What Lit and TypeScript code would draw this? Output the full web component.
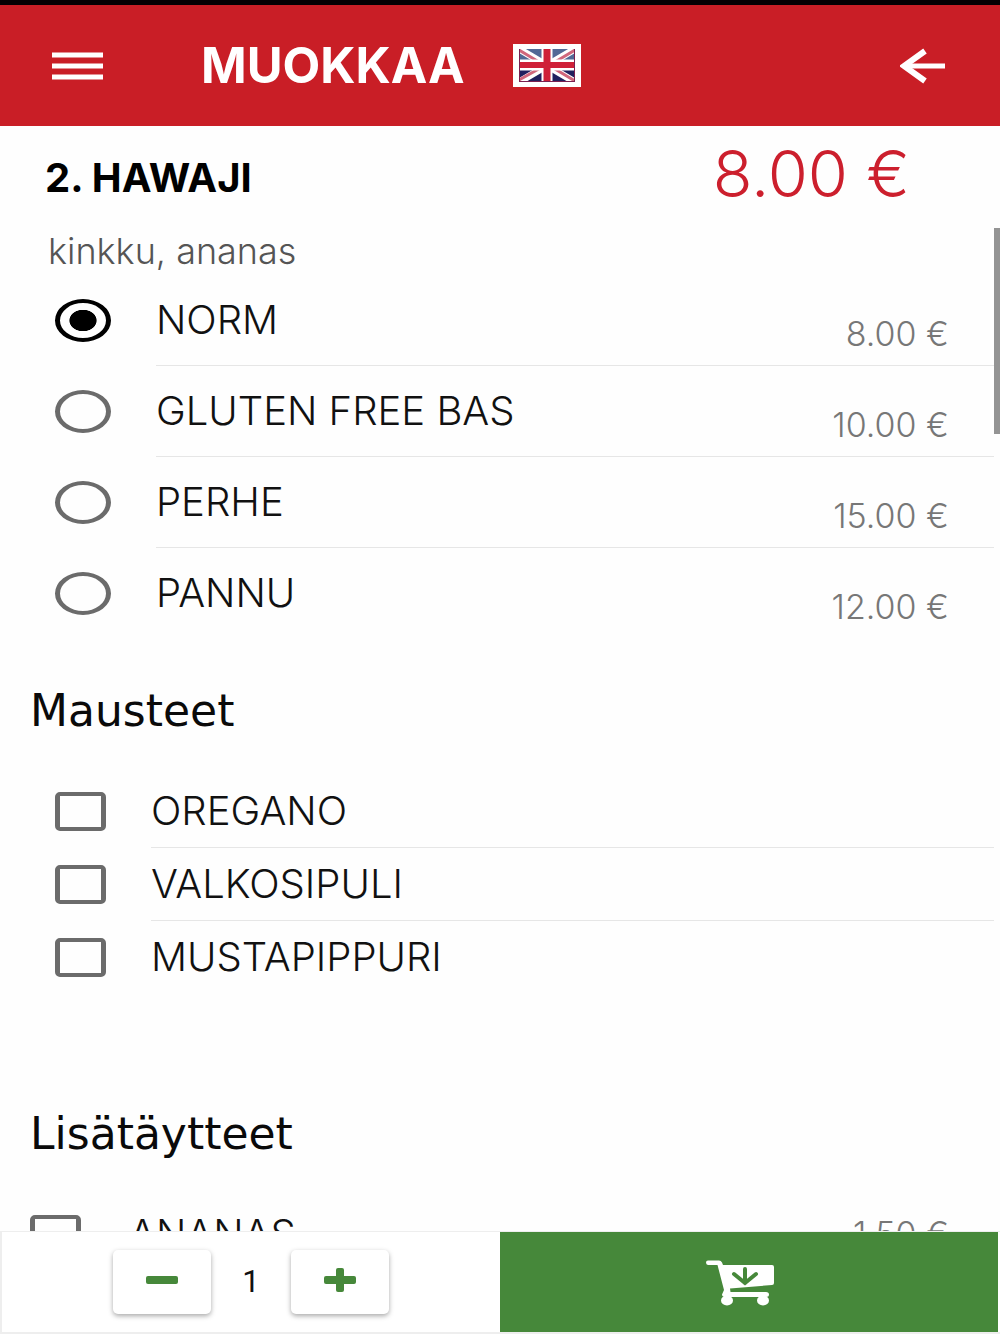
import { LitElement, html, css, nothing } from "lit";
import { customElement, state } from "lit/decorators.js";

interface Size {
  id: string;
  name: string;
  price: string;
}

const SIZES: Size[] = [
  { id: "norm", name: "NORM", price: "8.00 €" },
  { id: "gluten-free", name: "GLUTEN FREE BAS", price: "10.00 €" },
  { id: "perhe", name: "PERHE", price: "15.00 €" },
  { id: "pannu", name: "PANNU", price: "12.00 €" },
];

const SPICES = [
  { id: "oregano", name: "OREGANO" },
  { id: "valkosipuli", name: "VALKOSIPULI" },
  { id: "mustapippuri", name: "MUSTAPIPPURI" },
];

const TOPPINGS = [{ id: "ananas", name: "ANANAS", price: "1.50 €" }];

@customElement("app-root")
export class AppRoot extends LitElement {
  static styles = css`
    :host {
      display: flex;
      flex-direction: column;
      height: 100vh;
      box-sizing: border-box;
      border-top: 5px solid #050003;
      background: #fefefe;
      color: #111;
      font-family: Inter, Roboto, "Liberation Sans", sans-serif;
      font-weight: 300;
    }
    * {
      box-sizing: border-box;
    }
    button {
      margin: 0;
      padding: 0;
      border: 0;
      background: none;
      font: inherit;
      color: inherit;
      cursor: pointer;
    }
    svg {
      display: block;
    }
    .bar {
      flex: none;
      display: flex;
      align-items: center;
      height: 121px;
      padding: 0 52px;
      background: #c91e26;
      color: #fff;
    }
    .title {
      margin: 0 48px 0 98px;
      font-size: 49px;
      line-height: 56px;
      font-weight: 700;
    }
    .back {
      margin-left: auto;
    }
    .body {
      position: relative;
      flex: 1;
      min-height: 0;
    }
    .scroll {
      height: 100%;
      overflow-y: auto;
      scrollbar-width: none;
    }
    .thumb {
      position: absolute;
      top: 102px;
      right: 0;
      width: 6px;
      height: 206px;
      background: #949494;
    }
    .product {
      display: flex;
      align-items: center;
      justify-content: space-between;
      padding: 12px 90px 0 45px;
    }
    .name {
      margin: 0;
      padding-top: 8px;
      font-size: 40px;
      line-height: 44px;
      font-weight: 700;
      color: #000;
    }
    .total {
      font-size: 65px;
      line-height: 72px;
      color: #cc1f2d;
    }
    .desc {
      margin: 0;
      padding: 19px 48px 2px;
      font-size: 36px;
      line-height: 44px;
      color: #555;
    }
    .group {
      margin: 0;
      padding: 0 6px 0 55px;
      border: 0;
      min-width: 0;
    }
    .spices {
      padding-bottom: 68px;
    }
    .toppings {
      padding-left: 30px;
    }
    .row {
      display: flex;
      align-items: center;
      gap: 45px;
      cursor: pointer;
    }
    .toppings .row {
      gap: 48px;
    }
    .text {
      flex: 1;
      display: flex;
      align-items: center;
      justify-content: space-between;
      height: 73px;
      padding-right: 45px;
      border-bottom: 1px solid #e6e6e6;
      font-size: 40px;
      line-height: 44px;
    }
    .sizes .text {
      height: 91px;
    }
    .row:last-child .text {
      border-bottom-color: transparent;
    }
    .price {
      font-size: 34px;
      line-height: 40px;
      color: #777;
    }
    .sizes .price {
      padding-top: 28px;
    }
    .radio,
    .check {
      flex: none;
      appearance: none;
      margin: 0;
      border: solid #6b6b6b;
      border-width: 4px 5px;
      cursor: pointer;
    }
    .radio {
      width: 56px;
      height: 43px;
      border-radius: 50%;
    }
    .radio:checked {
      border-color: #000;
      background: radial-gradient(ellipse 14px 11px, #000 94%, transparent 100%);
    }
    .check {
      width: 51px;
      height: 39px;
      border-radius: 5px;
    }
    .check:checked {
      background: #6b6b6b;
    }
    .heading {
      margin: 0;
      padding: 48px 30px 40px;
      font-family: "DejaVu Sans", "Noto Sans", sans-serif;
      font-size: 44px;
      line-height: 48px;
      font-weight: 400;
      color: #0a0a0a;
    }
    .footer {
      flex: none;
      display: grid;
      grid-template-columns: 1fr 1fr;
      height: 103px;
      border: solid #eee;
      border-width: 1px 0 2px;
      background: #fff;
    }
    .quantity {
      display: grid;
      grid-template-columns: 98px 80px 98px;
      justify-content: center;
      align-items: center;
      border-left: 2px solid #eee;
    }
    .step {
      display: grid;
      justify-items: center;
      height: 64px;
      padding-top: 18px;
      border-radius: 5px;
      background: #fff;
      box-shadow: 0 2px 5px rgba(0, 0, 0, 0.34);
    }
    .count {
      text-align: center;
      font-family: Roboto, sans-serif;
      font-size: 31px;
      line-height: 40px;
      font-weight: 400;
    }
    .order {
      display: grid;
      place-items: center;
      margin-right: 2px;
      padding: 2px 18px 0 0;
      background: #46883a;
    }
  `;

  @state() private size = "norm";
  @state() private count = 1;

  private bump(delta: number) {
    this.count = Math.max(1, this.count + delta);
  }

  private checkRow(item: { id: string; name: string; price?: string }) {
    return html`
      <label class="row" for=${item.id}>
        <input class="check" type="checkbox" id=${item.id} name=${item.id} />
        <span class="text">
          <span>${item.name}</span>
          ${item.price ? html`<span class="price">${item.price}</span>` : nothing}
        </span>
      </label>
    `;
  }

  render() {
    return html`
      <header class="bar">
        <button aria-label="Valikko">
          <svg width="51" height="28" viewBox="0 0 51 28" fill="#fff">
            <path d="M0 0.5h51v5H0zM0 11.500h51v5H0zM0 22.500h51v5H0z" />
          </svg>
        </button>
        <h1 class="title">MUOKKAA</h1>
        <button aria-label="English">
          <svg width="68" height="43" viewBox="0 0 68 43">
            <rect width="68" height="43" fill="#fff" />
            <svg x="6" y="5" width="56" height="33" viewBox="0 0 56 33">
              <rect width="56" height="17" fill="#526996" />
              <rect y="16" width="56" height="17" fill="#20205e" />
              <path d="M0 0L56 33M56 0L0 33" stroke="#fff" stroke-width="7" />
              <path d="M0 1L25 16M56 1L31 16M0 31L25 17M56 32L31 17" stroke="#d0677c" stroke-width="3" />
              <path d="M28 0V33M0 16H56" stroke="#fff" stroke-width="11" />
              <path d="M28 0V33" stroke="#cf2038" stroke-width="7" />
              <path d="M0 16H56" stroke="#cf2038" stroke-width="6" />
              <path d="M0 0V33M56 0V33M0 33H56" stroke="#7a2050" stroke-width="2" fill="none" />
            </svg>
          </svg>
        </button>
        <button class="back" aria-label="Takaisin">
          <svg width="48" height="36" viewBox="0 0 48 36" fill="none" stroke="#fff" stroke-width="5">
            <path d="M45 18H4" />
            <path d="M25 3L4 18L25 33" stroke-width="6" />
          </svg>
        </button>
      </header>

      <div class="body">
        <main class="scroll">
          <div class="product">
            <h2 class="name">2. HAWAJI</h2>
            <span class="total">8.00 €</span>
          </div>
          <p class="desc">kinkku, ananas</p>

          <fieldset class="group sizes" aria-label="Koko">
            ${SIZES.map(
              (s) => html`
                <label class="row" for=${s.id}>
                  <input
                    class="radio"
                    type="radio"
                    name="size"
                    id=${s.id}
                    .checked=${this.size === s.id}
                    @change=${() => (this.size = s.id)}
                  />
                  <span class="text">
                    <span>${s.name}</span>
                    <span class="price">${s.price}</span>
                  </span>
                </label>
              `,
            )}
          </fieldset>

          <h3 class="heading" id="spices">Mausteet</h3>
          <fieldset class="group spices" aria-labelledby="spices">
            ${SPICES.map((s) => this.checkRow(s))}
          </fieldset>

          <h3 class="heading" id="toppings">Lisätäytteet</h3>
          <fieldset class="group toppings" aria-labelledby="toppings">
            ${TOPPINGS.map((t) => this.checkRow(t))}
          </fieldset>
        </main>
        <div class="thumb"></div>
      </div>

      <footer class="footer">
        <div class="quantity">
          <button class="step" aria-label="Vähennä" @click=${() => this.bump(-1)}>
            <svg width="32" height="24" viewBox="0 0 32 24" fill="#46883a">
              <rect x="0" y="8" width="32" height="8" rx="2" />
            </svg>
          </button>
          <output class="count">${this.count}</output>
          <button class="step" aria-label="Lisää" @click=${() => this.bump(1)}>
            <svg width="32" height="24" viewBox="0 0 32 24" fill="#46883a">
              <rect x="0" y="8" width="32" height="8" rx="2" />
              <rect x="12" y="0" width="8" height="24" rx="2" />
            </svg>
          </button>
        </div>
        <button class="order" aria-label="Lisää ostoskoriin">
          <svg width="68" height="46" viewBox="0 0 68 46" fill="#fff">
            <path d="M2 0.500H13Q15 0.500 16 2.500L17 5H66Q68 5 68 7V23Q68 25 66 25L24 28.500L24.500 32H60Q63 32 63 34.500T60 37H19Q16 36.500 16 34.500L18 30L11.500 5H2Q0 4.500 0 2.500T2 0.500Z" />
            <ellipse cx="21" cy="40.500" rx="6" ry="5" />
            <ellipse cx="57" cy="40.500" rx="6" ry="5" />
            <path d="M39 9V23M28 14L39 23L50 14" fill="none" stroke="#46883a" stroke-width="4" stroke-linecap="round" />
          </svg>
        </button>
      </footer>
    `;
  }
}
